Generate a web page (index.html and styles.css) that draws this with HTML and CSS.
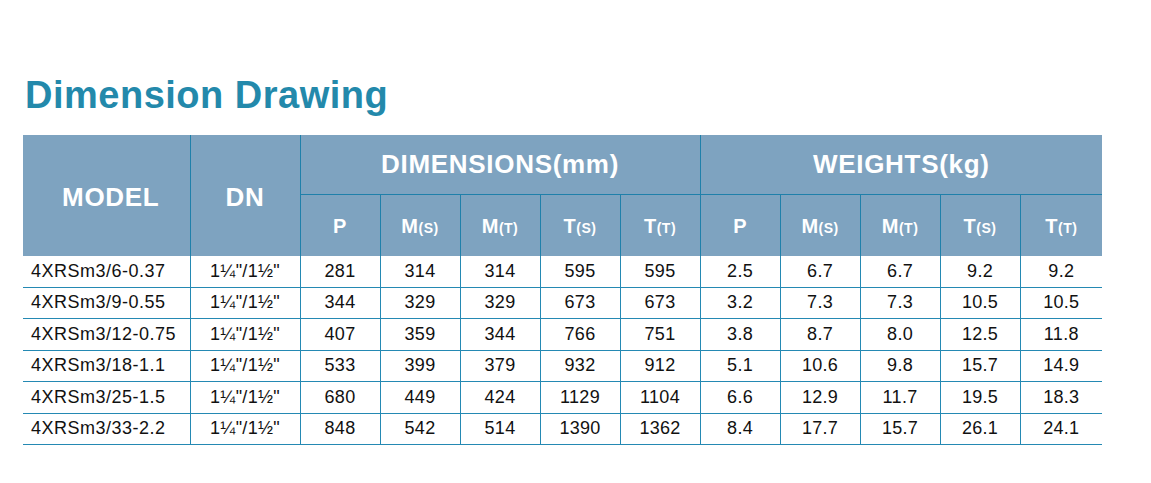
FILE: index.html
```html
<!DOCTYPE html>
<html lang="en">
<head>
    <meta charset="UTF-8">
    <meta name="viewport" content="width=device-width, initial-scale=1.0">
    <title>Dimension Drawing</title>
    <link rel="stylesheet" href="styles.css">
</head>
<body>
    <div class="page">
        <h2 class="title">Dimension Drawing</h2>

        <table class="spec">
            <colgroup>
                <col class="c-model">
                <col class="c-dn">
                <col span="9" class="c-num">
                <col class="c-last">
            </colgroup>
            <thead>
                <tr class="head-top">
                    <th rowspan="2" class="model-head">MODEL</th>
                    <th rowspan="2">DN</th>
                    <th colspan="5" class="group">DIMENSIONS(mm)</th>
                    <th colspan="5" class="group">WEIGHTS(kg)</th>
                </tr>
                <tr class="head-sub">
                    <th>P</th>
                    <th>M<small>(S)</small></th>
                    <th>M<small>(T)</small></th>
                    <th>T<small>(S)</small></th>
                    <th>T<small>(T)</small></th>
                    <th>P</th>
                    <th>M<small>(S)</small></th>
                    <th>M<small>(T)</small></th>
                    <th>T<small>(S)</small></th>
                    <th>T<small>(T)</small></th>
                </tr>
            </thead>
            <tbody>
                <tr>
                    <td class="model">4XRSm3/6-0.37</td><td>1¼"/1½"</td>
                    <td>281</td><td>314</td><td>314</td><td>595</td><td>595</td>
                    <td>2.5</td><td>6.7</td><td>6.7</td><td>9.2</td><td>9.2</td>
                </tr>
                <tr>
                    <td class="model">4XRSm3/9-0.55</td><td>1¼"/1½"</td>
                    <td>344</td><td>329</td><td>329</td><td>673</td><td>673</td>
                    <td>3.2</td><td>7.3</td><td>7.3</td><td>10.5</td><td>10.5</td>
                </tr>
                <tr>
                    <td class="model">4XRSm3/12-0.75</td><td>1¼"/1½"</td>
                    <td>407</td><td>359</td><td>344</td><td>766</td><td>751</td>
                    <td>3.8</td><td>8.7</td><td>8.0</td><td>12.5</td><td>11.8</td>
                </tr>
                <tr>
                    <td class="model">4XRSm3/18-1.1</td><td>1¼"/1½"</td>
                    <td>533</td><td>399</td><td>379</td><td>932</td><td>912</td>
                    <td>5.1</td><td>10.6</td><td>9.8</td><td>15.7</td><td>14.9</td>
                </tr>
                <tr>
                    <td class="model">4XRSm3/25-1.5</td><td>1¼"/1½"</td>
                    <td>680</td><td>449</td><td>424</td><td>1129</td><td>1104</td>
                    <td>6.6</td><td>12.9</td><td>11.7</td><td>19.5</td><td>18.3</td>
                </tr>
                <tr>
                    <td class="model">4XRSm3/33-2.2</td><td>1¼"/1½"</td>
                    <td>848</td><td>542</td><td>514</td><td>1390</td><td>1362</td>
                    <td>8.4</td><td>17.7</td><td>15.7</td><td>26.1</td><td>24.1</td>
                </tr>
            </tbody>
        </table>
    </div>
</body>
</html>
```

FILE: styles.css
```css
/* Global Styles */
body {
    margin: 0;
    background: #fff;
    font-family: 'Liberation Sans', Arial, sans-serif;
    color: #111;
}

.page {
    padding: 73px 0 0 23px;
}

.title {
    margin: 0 0 0 2px;
    font-size: 38px;
    line-height: 44px;
    letter-spacing: 0.5px;
    font-weight: bold;
    color: #2389ab;
}

/* Spec Table */
.spec {
    margin-top: 18px;
    border-collapse: collapse;
    table-layout: fixed;
    width: 1079px;
}

.c-model { width: 167px; }
.c-dn { width: 110px; }
.c-num { width: 80px; }
.c-last { width: 82px; }

.spec th {
    background: #7ea3c0;
    color: #fff;
    font-weight: bold;
    text-align: center;
    padding: 0;
    border-left: 1px solid #1f80aa;
}

.spec th:first-child {
    border-left: none;
}

.head-top th {
    height: 59px;
    font-size: 26px;
    letter-spacing: 0.7px;
}

.head-top th[rowspan] {
    padding-top: 3px;
}

.head-top .model-head {
    padding-left: 9px;
}

.head-top .group {
    border-bottom: 1px solid #1f80aa;
}

.head-sub th {
    height: 59px;
    font-size: 20px;
    letter-spacing: 0.5px;
    padding-top: 2px;
}

.head-sub th:first-child {
    border-left: 1px solid #1f80aa;
}

.spec small {
    font-size: 14px;
    font-weight: bold;
}

.spec td {
    height: 30.5px;
    padding: 0;
    font-size: 18px;
    letter-spacing: 0.3px;
    text-align: center;
    border-left: 1px solid #2489b3;
    border-bottom: 1px solid #2489b3;
}

.spec td:first-child {
    border-left: none;
}

.spec td.model {
    text-align: left;
    padding-left: 8px;
    letter-spacing: 0.5px;
}
```
